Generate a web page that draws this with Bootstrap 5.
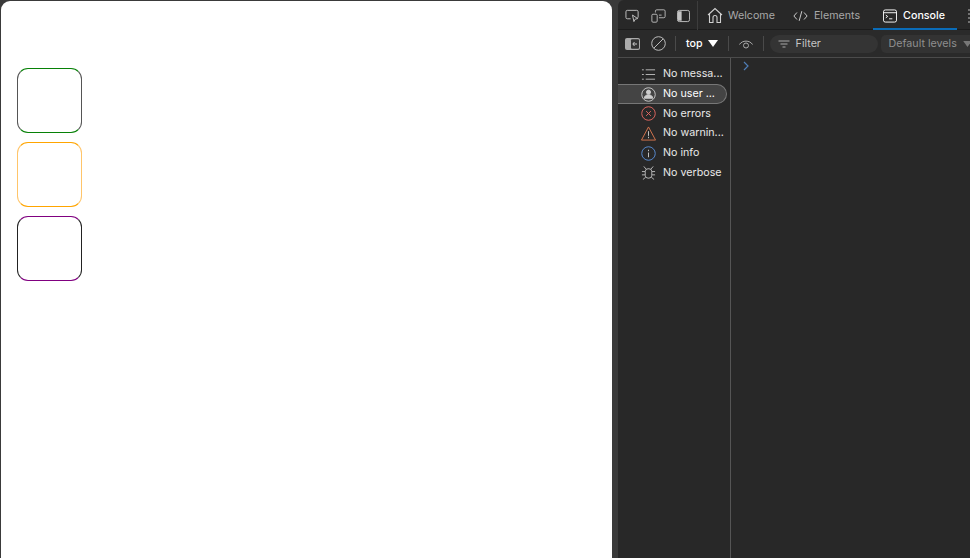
<!DOCTYPE html>
<html lang="en">
<head>
<meta charset="utf-8">
<title>Page and DevTools</title>
<link href="https://cdn.jsdelivr.net/npm/bootstrap@5.3.0/dist/css/bootstrap.min.css" rel="stylesheet">
<style>
html,body{height:100%;overflow:hidden;background:#333}
.shell{width:970px;height:558px;background:#3a3a3a}
.page-pane{width:611px;flex:none;background:#fff;border-radius:9px 9px 0 0;margin-left:1px;margin-top:1px;padding:67px 0 0 16px;gap:9px}
.box-item{width:65px;height:65px;border-radius:11px;border:1px solid}
.b-green{border-color:#078107 #555 #078107 #555}
.b-orange{border-color:#ffa500 #ffc56a #ffa500 #ffc56a}
.b-purple{border-color:purple #222 purple #222}
.dev-pane{margin-left:6px;width:352px;flex:none;background:#282828;font-family:"Inter","Liberation Sans",sans-serif;color:#c7c7c7;font-size:10.7px;overflow:hidden;border-top-left-radius:6px}
.tab-bar{height:30px;padding-top:1px;border-bottom:1px solid #1c1c1c;flex:none;white-space:nowrap;position:relative}
.tool-icons{padding-left:7px;gap:11px;width:80px;height:29px;flex:none;border-right:1px solid #3d3d3d}
.tab-item{height:29px;color:#a9a9a9;flex:none;position:relative}
.tab-item span,.tool-row span{padding-top:2px}
.tab-home{margin-left:9px;gap:5px}
.tab-elements{margin-left:18px;gap:6px}
.tab-on{margin-left:13px;padding:0 12px 0 10px;gap:6px;color:#fff}
.tab-on::after{content:"";position:absolute;left:0;right:0;bottom:0;height:2.5px;background:#0a6cb8}
.tab-more{margin-left:11px}
.tool-row{height:28px;border-bottom:1px solid #4b4b4b;flex:none;white-space:nowrap;background:#2a2a2a;padding-left:7px}
.vsep{width:1px;height:15px;background:#4a4a4a;flex:none}
.gap-a{margin-left:11px}
.gap-b{margin-left:9px}
.gap-c{margin-left:10px}
.gap-d{margin-left:5px}
.filter-pill{width:108px;height:18px;background:#343434;border-radius:9px;gap:6px;padding-left:8px;color:#c4c4c4;flex:none;margin-left:6px}
.level-pill{width:110px;height:18px;background:#333;padding-left:8px;color:#8f8f8f;flex:none;border-radius:5px 0 0 5px;margin-left:3px;gap:6px}
.side-list{width:113px;border-right:1px solid #555;flex:none;padding-top:6.5px}
.side-item{height:19.7px;padding-left:23px;gap:7px;color:#e8e8e8;white-space:nowrap;width:109px;border-radius:0 10px 10px 0}
.side-on{background:#444;border:1px solid #777;border-left:0;color:#fff}
.side-icon{width:15px;height:15px}
.caret-cell{padding:3px 0 0 12px}
svg{display:block;flex:none}
</style>
</head>
<body>
<div class="shell d-flex overflow-hidden">
  <div class="page-pane d-flex flex-column">
    <div class="box-item b-green"></div>
    <div class="box-item b-orange"></div>
    <div class="box-item b-purple"></div>
  </div>
  <div class="dev-pane d-flex flex-column">
    <div class="tab-bar d-flex">
      <div class="tool-icons d-flex align-items-center">
        <svg width="15" height="15" viewBox="0 0 16 15" fill="none" stroke="#c4c4c4" stroke-width="1"><path d="M6 11H2.500A1.500 1.500 0 0 1 1 9.500V3.500A1.500 1.500 0 0 1 2.500 2h10A1.500 1.500 0 0 1 14 3.500V9a1.500 1.500 0 0 1-1 1.400"/><path d="M8 7l1.500 7 1.300-2.600 2.700-.6z"/></svg>
        <svg width="15" height="16" viewBox="0 0 17 16" fill="none" stroke="#c4c4c4" stroke-width="1"><rect x="1" y="6" width="6" height="9" rx="1.200"/><path d="M5 4V2.500A1.500 1.500 0 0 1 6.500 1h8A1.500 1.500 0 0 1 16 2.500v6a1.500 1.500 0 0 1-1.500 1.500H9M9 7h3"/></svg>
        <svg width="13" height="14" viewBox="0 0 14 14" fill="none" stroke="#c4c4c4" stroke-width="1"><rect x=".5" y="1" width="13" height="12" rx="2"/><path d="M1 2h4v10H1z" fill="#c4c4c4" stroke="none"/></svg>
      </div>
      <div class="tab-item tab-home d-flex align-items-center">
        <svg width="16" height="17" viewBox="0 0 16 17" fill="none" stroke="#d0d0d0" stroke-width="1.100"><path d="M1 8 8 1.500 15 8M2.500 7v8.500h3.500v-5a2 2 0 0 1 4 0v5h3.500V7"/></svg>
        <span>Welcome</span>
      </div>
      <div class="tab-item tab-elements d-flex align-items-center">
        <svg width="15" height="12" viewBox="0 0 17 12" fill="none" stroke="#d0d0d0" stroke-width="1.100"><path d="M4.500 2 1 6l3.500 4M12.500 2 16 6l-3.500 4M10 .5 7 11.500"/></svg>
        <span>Elements</span>
      </div>
      <div class="tab-item tab-on d-flex align-items-center">
        <svg width="14" height="14" viewBox="0 0 15 14" fill="none" stroke="#fff" stroke-width="1"><rect x=".5" y=".5" width="14" height="13" rx="2"/><path d="M.5 3.500h14M3 6l2 1.500L3 9M6.500 10H10"/></svg>
        <span class="fw-medium">Console</span>
      </div>
      <div class="tab-item tab-more d-flex align-items-center">
        <svg width="8" height="14" viewBox="0 0 8 14" fill="none" stroke="#bbb" stroke-width="1"><path d="M0 1h3M5 1h3M0 5h8M0 9h3M5 9h3M0 13h8"/></svg>
      </div>
    </div>
    <div class="tool-row d-flex align-items-center">
      <svg width="15" height="12" viewBox="0 0 15 12"><rect width="15" height="12" rx="2" fill="#aaa"/><rect x="6" y="1.200" width="8" height="9.600" rx="1" fill="#333"/><path d="M12 6H8M9.500 4 7.800 6l1.700 2" stroke="#ccc" fill="none"/></svg>
      <svg class="gap-a" width="15" height="15" viewBox="0 0 15 15" fill="none" stroke="#bbb" stroke-width="1"><circle cx="7.500" cy="7.500" r="6.800"/><path d="M2.800 12.200 12.200 2.800"/></svg>
      <div class="vsep gap-b"></div>
      <span class="gap-c fw-medium text-white">top</span>
      <svg class="gap-d" width="10" height="7" viewBox="0 0 10 7"><path d="M0 0h10L5 7z" fill="#fff"/></svg>
      <div class="vsep gap-c"></div>
      <svg class="gap-c" width="14" height="10" viewBox="0 0 14 10" fill="none" stroke="#aaa" stroke-width="1"><path d="M.5 5.500C3 1 11 1 13.500 5.500"/><circle cx="7" cy="6.500" r="2.500"/></svg>
      <div class="vsep gap-c"></div>
      <div class="filter-pill d-flex align-items-center">
        <svg width="12" height="8" viewBox="0 0 11 8" stroke="#aaa" fill="none"><path d="M0 1h11M2 4h7M4 7h3"/></svg>
        <span>Filter</span>
      </div>
      <div class="level-pill d-flex align-items-center"><span>Default levels</span><svg width="9" height="6" viewBox="0 0 10 7"><path d="M0 0h10L5 7z" fill="#777"/></svg></div>
    </div>
    <div class="d-flex flex-grow-1">
      <div class="side-list">
        <div class="side-item d-flex align-items-center">
          <svg class="side-icon" viewBox="0 0 16 16" fill="none" stroke="#bbb"><path d="M5 3h10M5 8h10M5 13h10M1 3h2M1 8h2M1 13h2"/></svg><span>No messa...</span>
        </div>
        <div class="side-item side-on d-flex align-items-center">
          <svg class="side-icon" viewBox="0 0 16 16" fill="none" stroke="#ccc"><circle cx="8" cy="8" r="7.200"/><circle cx="8" cy="5.500" r="2.200" fill="#ccc"/><path d="M3.500 12c0-5 9-5 9 0z" fill="#ccc"/></svg><span>No user ...</span>
        </div>
        <div class="side-item d-flex align-items-center">
          <svg class="side-icon" viewBox="0 0 16 16" fill="none" stroke="#e46962"><circle cx="8" cy="8" r="7.200"/><path d="M5.500 5.500l5 5M10.500 5.500l-5 5"/></svg><span>No errors</span>
        </div>
        <div class="side-item d-flex align-items-center">
          <svg class="side-icon" viewBox="0 0 16 16" fill="none" stroke="#d9764f"><path d="M8 1 15.500 15H.5z"/><path d="M8 5.500v5M8 11.500v1.500" stroke="#ccc"/></svg><span>No warnin...</span>
        </div>
        <div class="side-item d-flex align-items-center">
          <svg class="side-icon" viewBox="0 0 16 16" fill="none" stroke="#5b8fd6"><circle cx="8" cy="8" r="7.200"/><path d="M8 7v5M8 4v1.500" stroke="#ccc"/></svg><span>No info</span>
        </div>
        <div class="side-item d-flex align-items-center">
          <svg class="side-icon" viewBox="0 0 16 16" fill="none" stroke="#bbb"><rect x="4.500" y="4" width="7" height="10" rx="3"/><path d="M5.500 4.500 3 1.500M10.500 4.500 13 1.500M4.500 7H1M11.500 7H15M4.500 10.500H1M11.500 10.500H15M5 13l-3 2.500M11 13l3 2.500"/></svg><span>No verbose</span>
        </div>
      </div>
      <div class="caret-cell">
        <svg width="6" height="10" viewBox="0 0 6 10" fill="none" stroke="#4f7db5" stroke-width="1.200"><path d="M1 1l4 4-4 4"/></svg>
      </div>
    </div>
  </div>
</div>
<script src="https://cdn.jsdelivr.net/npm/bootstrap@5.3.0/dist/js/bootstrap.bundle.min.js"></script>
</body>
</html>
